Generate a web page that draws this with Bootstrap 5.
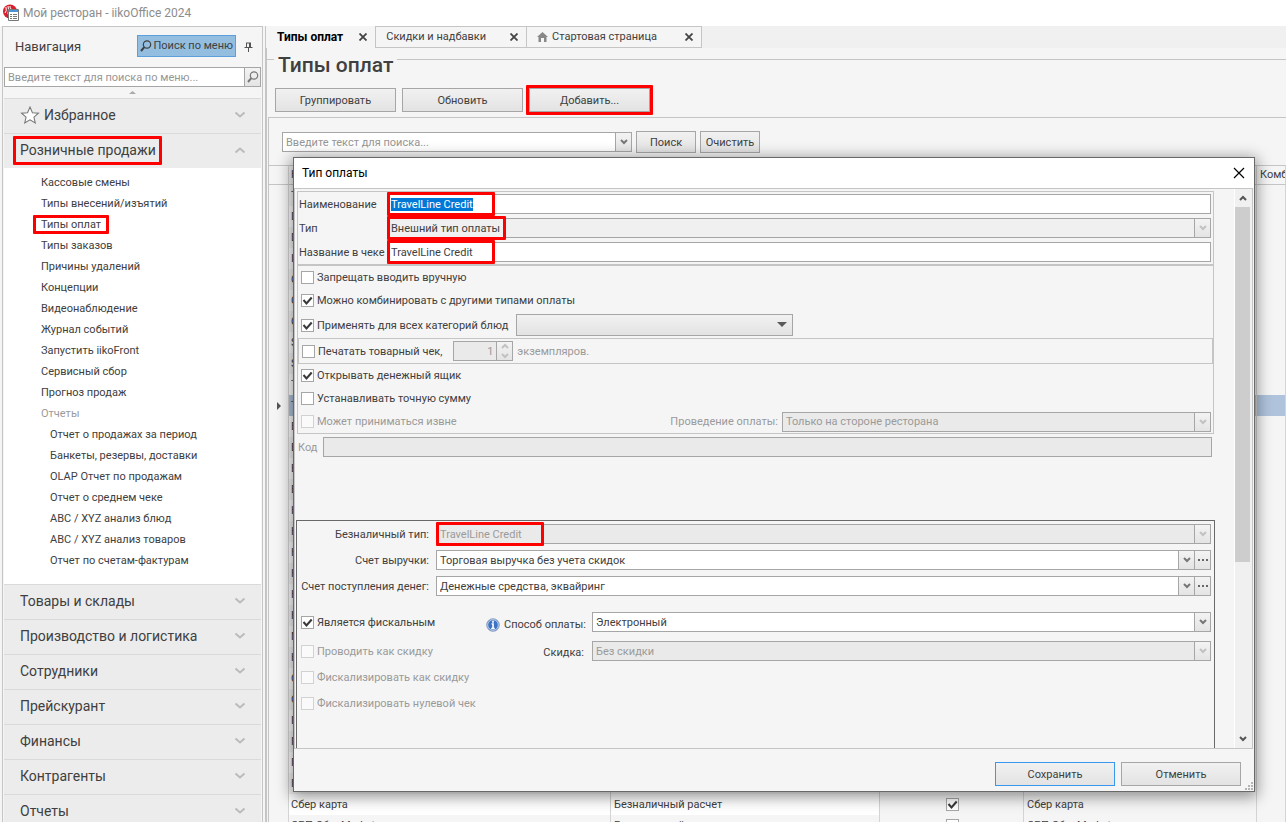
<!DOCTYPE html>
<html lang="ru">
<head>
<meta charset="utf-8">
<meta name="viewport" content="width=device-width, initial-scale=1">
<title>Мой ресторан - iikoOffice 2024</title>
<link href="https://cdn.jsdelivr.net/npm/bootstrap@5.3.0/dist/css/bootstrap.min.css" rel="stylesheet">
<style>
:root{--ink:#404040;--line:#c5c5c5;--edge:#a6a6a6;--face:#f5f5f5;--dim:#9a9a9a}
body{font-family:Roboto,"Liberation Sans",sans-serif;font-size:11px;line-height:16px;color:var(--ink);background:var(--face)}
a{color:inherit;text-decoration:none}
input,select,button{font:inherit;color:inherit;border-radius:0}
.titlebar{height:26px;font-size:12px;color:#8c8c8c;background:#fff;padding-left:3px}
/* annotation frames */
.frame{position:absolute;border:3px solid #f00;border-radius:1px;pointer-events:none;z-index:3}
.frame-head{inset:-6px -6px -7px -7px}
.frame-item{inset:-3px -8px -3px -8px}
.frame-btn{inset:-3px}
.frame-field{top:-3px;bottom:-3px;left:-1px;width:108px}
.frame-wide{width:119px}
/* buttons */
.push{height:24px;min-width:121px;padding:1px 3px 0;border:1px solid var(--edge);border-radius:0;background:linear-gradient(#f1f1f1,#e3e3e3);font-size:11px;line-height:21px;color:var(--ink)}
.push-sm{height:22px;min-width:60px;line-height:19px}
.push-main{border-color:#3a97ee}
.six{gap:6px}
/* side panel */
.side{width:261px;margin-left:2px;border:1px solid var(--line);border-bottom:0;padding:0 1px}
.side-title{font-size:13px;padding:8px 0 0 11px;height:40px}
.menu-find{height:22px;padding:0 2px;gap:1px;border:1px solid #5c9fdc;background:#93bee0;border-radius:0;font-size:11px;line-height:20px;color:var(--ink)}
.group-head{display:flex;align-items:center;height:35px;padding:0 15px 2px 16px;border-top:1px solid #dadada;background:#ececec;font-size:14px;line-height:16px}
.group-list{background:#fff;padding:4px 0 13px 37px}
.group-list li{height:21px;line-height:21px}
.group-list .deep{padding-left:9px}
/* tabs */
.tabs{height:22px;background:#f0f0f0}
.tab-item{height:22px;border:1px solid var(--line);border-left:0;padding:0 8px 0 10px;background:var(--face)}
.tab-item.on{height:24px;border-left:1px solid var(--line);border-bottom:0;margin:-2px 0 0 -2px;font-size:12px;font-weight:700;color:#000;padding:0 8px 0 11px}
.tab-x{border:0;background:none;padding:0;line-height:8px}
.work{border-left:2px solid var(--line);margin-left:2px}
.box-title{font-size:21px;line-height:26px;padding:2px 4px 0;margin:-2px 0 -2px 7px}
.rule{height:1px;background:var(--line);margin-top:7px}
.rule-start{width:7px;margin-right:-7px}
.tools{padding:10px 0 0 8px}
.panel-in{border:1px solid var(--line);border-width:1px 0 0 1px;margin:5px 0 0 1px;padding-top:13px}
/* fields */
.field{height:20px;border:1px solid var(--edge);background:#fff}
.field>input,.field>select{height:18px;line-height:16px;border:0;padding:1px 3px 0;background:none;outline:0;appearance:none;flex:1 1 0;min-width:0;width:0;opacity:1}
.field>input::placeholder{color:#969696}
.field.off{background:#eaeaea;color:var(--dim)}
.field.still{background:#f0f0f0}
.field .knob{width:16px;border:0;border-left:1px solid var(--edge);padding:0;background:linear-gradient(#f3f3f3,#e4e4e4);color:#777;display:flex;align-items:center;justify-content:center;flex:none}
.field.off .knob,.field.still .knob{color:#c2c2c2}
.field>select+.knob{pointer-events:none}
.search{width:350px;margin-left:-3px}
.tall{height:22px;background:linear-gradient(#f1f1f1,#e3e3e3)}
.cats{width:277px}
.lab{padding-top:1px}
::selection{background:#0078d7;color:#fff}
.tick{appearance:none;width:13px;height:13px;margin:0;border:1px solid var(--edge);background:#fff;flex:none}
.tick:checked{background:#fff url("data:image/svg+xml,%3Csvg xmlns='http://www.w3.org/2000/svg' viewBox='0 0 11 11'%3E%3Cpath d='M1.5 5L4.5 8.5L9.7 2.5' fill='none' stroke='%23383838' stroke-width='2'/%3E%3C/svg%3E")}
.tick:disabled{border-color:#d2d2d2;background:#fafafa}
.opt{display:flex;align-items:center;gap:3px;height:23px}
.opt>span{padding-top:1px}
.dim{color:var(--dim)}
/* grid */
.grid{table-layout:fixed;width:100%;border-collapse:separate;border-spacing:0;margin:12px 0 0}
.grid th,.grid td{height:21px;padding:0 2px;border-right:1px solid #d4d4d4;font-weight:400;line-height:16px;white-space:nowrap;overflow:hidden}
.grid td:nth-child(n+3),.grid th:nth-child(n+3){padding-left:3px}
.grid th{height:20px;border-top:1px solid var(--line);border-bottom:1px solid var(--line)}
.grid tr.odd td.zebra{background:#fff}
.grid tr.cur td{background:#afc3dc}
.grid td:first-child,.grid tr.cur td:first-child{background:var(--face)}
.grid td .tick{display:block;margin:auto}
.now{display:block;margin-left:6px}
/* dialog */
.dlg{position:absolute;inset:157px 31px 30px 293px;border:1px solid #696969;background:var(--face);box-shadow:0 3px 14px 2px rgba(0,0,0,.42);z-index:5}
.dlg-head{height:30px;background:#fff;color:#000;font-size:12px;padding:0 9px 0 8px}
.pane{border:1px solid var(--line);min-height:0;margin-right:1px}
.form-area{padding:2px 19px 0 1px}
.set-a{border:1px solid var(--line);padding:2px 2px 2px 1px;margin:0 1px}
.set-a .lab{width:88px}
.set-b{border:1px solid var(--line);margin:0 1px}
.set-b .opt{padding-left:3px}
.set-b .opt-h{height:26px}
.set-b .out{padding-right:2px}
.boxed{border:1px solid var(--line);height:26px;gap:11px}
.spin{width:60px;height:20px}
.copies{margin-left:-7px;padding-top:1px}
.where{width:47%}
.set-c{border:1px solid #696969;border-bottom:0;margin-top:63px;padding:3px 3px 0 2px;gap:6px}
.set-c .lab{width:133px;padding-right:3px;text-align:right;white-space:nowrap}
.set-c .left{width:187px}
.set-c .cap{width:106px;height:20px;white-space:nowrap}
.set-c .cap-low{padding-top:6px}
.set-c .opt{height:20px;padding-left:2px}
.pay{margin-top:10px}
.disc{margin-top:3px}
.code-row{margin:3px 3px 0 2px;height:20px}
.scroller{width:18px;background:#f0f0f0;border-left:1px solid #fff;color:#555}
.scroller button{height:18px;border:0;background:none;padding:0 2px 0 0;color:inherit}
.thumb{flex:355 1 0;background:#cdcdcd;margin-right:2px}
.track{flex:168 1 0}
.dlg-foot{height:42px;padding:13px 13px 0 0}
.dlg-foot .push{width:120px;min-width:0}
.grip{position:absolute;right:1px;bottom:1px}
</style>
</head>
<body class="vh-100 overflow-hidden d-flex flex-column position-relative">
<svg class="d-none" xmlns="http://www.w3.org/2000/svg">
  <symbol id="down" viewBox="0 0 8 6"><path d="M1 1l3 3 3-3" fill="none" stroke="currentColor" stroke-width="2"/></symbol>
  <symbol id="up" viewBox="0 0 8 6"><path d="M1 5l3-3 3 3" fill="none" stroke="currentColor" stroke-width="2"/></symbol>
  <symbol id="chev" viewBox="0 0 12 8"><path d="M1.500 1.500l4.500 4 4.500-4" fill="none" stroke="#bbb" stroke-width="2"/></symbol>
  <symbol id="lens" viewBox="0 0 12 12"><circle cx="7" cy="4.500" r="3.700" fill="none" stroke="currentColor" stroke-width="1.200"/><path d="M4.300 7.200L1 11" stroke="currentColor" stroke-width="2"/></symbol>
  <symbol id="cross" viewBox="0 0 8 8"><path d="M.5.5l7 7M7.500.5l-7 7" stroke="#444" stroke-width="1.800"/></symbol>
</svg>

<header class="titlebar d-flex align-items-center gap-1 flex-shrink-0">
  <svg width="16" height="18" viewBox="0 0 16 18" aria-hidden="true"><circle cx="7" cy="7.500" r="7" fill="#d81e2c"/><path d="M3 3q1 4-1 6M5 2q1 3 0 8M7 2q0 2 1 3" stroke="#fff" fill="none"/><path d="M5.500 5.500h10v11h-10z" fill="#fff" stroke="#777"/><path d="M6 6h9v2H6z" fill="#4b93d8"/><path d="M7 10.500h2m1 0h4M7 12.500h2m1 0h4M7 14.500h2m1 0h4" stroke="#777"/></svg>
  <span>Мой ресторан - iikoOffice 2024</span>
</header>

<div class="d-flex flex-grow-1 overflow-hidden">
  <nav class="side flex-shrink-0 overflow-hidden" aria-label="Навигация">
    <div class="d-flex">
      <div class="side-title flex-grow-1 pt-2 d-flex"><span class="mt-1">Навигация</span></div>
      <div class="d-flex align-items-start gap-2 pt-2">
        <button class="menu-find d-flex align-items-center"><svg width="12" height="12"><use href="#lens"/></svg>Поиск по меню</button>
        <button class="border-0 bg-transparent p-0 me-2 mt-1" aria-label="Закрепить"><svg width="9" height="10" viewBox="0 0 9 10"><path d="M2.500 1v4.500M6 1v4.500M2 1h5M.5 5.500h8M4.500 6v4" stroke="#555" fill="none"/><path d="M5 1h2v4H5z" fill="#555"/></svg></button>
      </div>
    </div>
    <div class="field d-flex"><input type="text" placeholder="Введите текст для поиска по меню..." aria-label="Поиск по меню"><button class="knob" aria-label="Найти"><svg width="12" height="12"><use href="#lens"/></svg></button></div>
    <div class="text-center lh-1 pb-1"><svg class="d-block mx-auto pt-1" width="7" height="7" viewBox="0 0 7 3"><path d="M0 3l3.500-3L7 3z" fill="#aaa"/></svg></div>
    <a href="#" class="group-head"><svg class="me-1" width="20" height="18" viewBox="0 0 18 17"><path d="M9 1l2.300 5.300 5.700.5-4.300 3.700 1.300 5.500L9 13l-5 3 1.300-5.500L1 6.800l5.700-.5z" fill="#fff" stroke="#777"/></svg><span class="flex-grow-1">Избранное</span><svg width="12" height="8"><use href="#chev"/></svg></a>
    <a href="#" class="group-head"><span class="position-relative">Розничные продажи<i class="frame frame-head"></i></span><svg class="ms-auto" width="12" height="8" viewBox="0 0 12 8"><path d="M1.500 6.500l4.500-4 4.500 4" fill="none" stroke="#bbb" stroke-width="2"/></svg></a>
    <ul class="group-list list-unstyled mb-0">
      <li><a href="#">Кассовые смены</a></li><li><a href="#">Типы внесений/изъятий</a></li>
      <li><a href="#" class="position-relative">Типы оплат<i class="frame frame-item"></i></a></li>
      <li><a href="#">Типы заказов</a></li><li><a href="#">Причины удалений</a></li><li><a href="#">Концепции</a></li>
      <li><a href="#">Видеонаблюдение</a></li><li><a href="#">Журнал событий</a></li><li><a href="#">Запустить iikoFront</a></li>
      <li><a href="#">Сервисный сбор</a></li><li><a href="#">Прогноз продаж</a></li><li class="dim">Отчеты</li>
      <li class="deep"><a href="#">Отчет о продажах за период</a></li><li class="deep"><a href="#">Банкеты, резервы, доставки</a></li>
      <li class="deep"><a href="#">OLAP Отчет по продажам</a></li><li class="deep"><a href="#">Отчет о среднем чеке</a></li>
      <li class="deep"><a href="#">ABC / XYZ анализ блюд</a></li><li class="deep"><a href="#">ABC / XYZ анализ товаров</a></li>
      <li class="deep"><a href="#">Отчет по счетам-фактурам</a></li>
    </ul>
    <a href="#" class="group-head"><span class="flex-grow-1">Товары и склады</span><svg width="12" height="8"><use href="#chev"/></svg></a>
    <a href="#" class="group-head"><span class="flex-grow-1">Производство и логистика</span><svg width="12" height="8"><use href="#chev"/></svg></a>
    <a href="#" class="group-head"><span class="flex-grow-1">Сотрудники</span><svg width="12" height="8"><use href="#chev"/></svg></a>
    <a href="#" class="group-head"><span class="flex-grow-1">Прейскурант</span><svg width="12" height="8"><use href="#chev"/></svg></a>
    <a href="#" class="group-head"><span class="flex-grow-1">Финансы</span><svg width="12" height="8"><use href="#chev"/></svg></a>
    <a href="#" class="group-head"><span class="flex-grow-1">Контрагенты</span><svg width="12" height="8"><use href="#chev"/></svg></a>
    <a href="#" class="group-head"><span class="flex-grow-1">Отчеты</span><svg width="12" height="8"><use href="#chev"/></svg></a>
  </nav>

  <main class="work flex-grow-1 d-flex flex-column">
    <div class="tabs d-flex flex-shrink-0">
      <div class="tab-item on d-flex align-items-center"><span class="me-3">Типы оплат</span><button class="tab-x" aria-label="Закрыть"><svg width="8" height="8"><use href="#cross"/></svg></button></div>
      <div class="tab-item d-flex align-items-center gap-4"><a href="#">Скидки и надбавки</a><button class="tab-x" aria-label="Закрыть"><svg width="8" height="8"><use href="#cross"/></svg></button></div>
      <div class="tab-item d-flex align-items-center"><svg class="me-1" width="11" height="10" viewBox="0 0 11 10"><path d="M5.500 0L11 5H9.500v5h-2.500V6H4v4H1.500V5H0z" fill="#888"/></svg><a href="#" class="me-4">Стартовая страница</a><button class="tab-x ms-1" aria-label="Закрыть"><svg width="8" height="8"><use href="#cross"/></svg></button></div>
    </div>
    <div class="d-flex pt-1"><div class="rule rule-start flex-shrink-0"></div><h1 class="box-title mb-0">Типы оплат</h1><div class="rule flex-grow-1"></div></div>
    <div class="tools d-flex six">
      <button class="push">Группировать</button><button class="push">Обновить</button>
      <span class="position-relative"><button class="push d-block">Добавить...</button><i class="frame frame-btn"></i></span>
    </div>
    <section class="panel-in flex-grow-1">
      <div class="d-flex align-items-center gap-1 ps-3">
        <div class="field search d-flex"><input type="text" placeholder="Введите текст для поиска..." aria-label="Поиск"><button class="knob" aria-label="Список"><svg width="8" height="6"><use href="#down"/></svg></button></div>
        <button class="push push-sm">Поиск</button><button class="push push-sm">Очистить</button>
      </div>
      <table class="grid">
        <colgroup><col style="width:20px"><col style="width:322px"><col style="width:269px"><col style="width:144px"><col style="width:233px"><col></colgroup>
        <thead><tr><th></th><th>Н</th><th></th><th></th><th></th><th>Комб</th></tr></thead>
        <tbody id="rows"></tbody>
      </table>
    </section>
  </main>
</div>

<div class="dlg d-flex flex-column" role="dialog" aria-labelledby="dlgTitle">
  <div class="dlg-head d-flex align-items-center justify-content-between flex-shrink-0"><span id="dlgTitle">Тип оплаты</span>
    <button class="border-0 bg-transparent p-0 lh-1" aria-label="Закрыть"><svg width="12" height="12" viewBox="0 0 12 12"><path d="M1 1l10 10M11 1L1 11" stroke="#000" stroke-width="1.200"/></svg></button></div>
  <div class="pane d-flex flex-grow-1 overflow-hidden">
    <form class="form-area flex-grow-1 d-flex flex-column" autocomplete="off">
      <div class="set-a d-flex flex-column gap-1">
        <div class="d-flex align-items-center"><label class="lab" for="nm">Наименование</label><div class="field d-flex flex-grow-1 position-relative"><input id="nm" type="text" value="TravelLine Credit"><i class="frame frame-field"></i></div></div>
        <div class="d-flex align-items-center"><label class="lab" for="tp">Тип</label><div class="field still d-flex flex-grow-1 position-relative"><select id="tp"><option>Внешний тип оплаты</option></select><span class="knob"><svg width="8" height="6"><use href="#down"/></svg></span><i class="frame frame-field frame-wide"></i></div></div>
        <div class="d-flex align-items-center"><label class="lab" for="ch">Название в чеке</label><div class="field d-flex flex-grow-1 position-relative"><input id="ch" type="text" value="TravelLine Credit"><i class="frame frame-field"></i></div></div>
      </div>
      <div class="set-b">
        <label class="opt"><input type="checkbox" class="tick"><span>Запрещать вводить вручную</span></label>
        <label class="opt"><input type="checkbox" class="tick" checked><span>Можно комбинировать с другими типами оплаты</span></label>
        <div class="d-flex opt-h opt gap-2"><label class="opt p-0"><input type="checkbox" class="tick" checked><span>Применять для всех категорий блюд</span></label>
          <div class="field tall cats d-flex"><select aria-label="Категории блюд"><option></option></select><svg class="align-self-center me-1" width="12" height="6" viewBox="0 0 12 6"><path d="M1 0h10L6 5z" fill="#595959"/></svg></div></div>
        <div class="boxed d-flex align-items-center"><label class="opt"><input type="checkbox" class="tick"><span>Печатать товарный чек,</span></label>
          <div class="field off spin d-flex"><input class="text-end" type="text" value="1" disabled aria-label="Количество экземпляров"><span class="knob flex-column"><svg width="8" height="6"><use href="#up"/></svg><svg class="mt-1" width="8" height="6"><use href="#down"/></svg></span></div><span class="dim copies">экземпляров.</span></div>
        <label class="opt"><input type="checkbox" class="tick" checked><span>Открывать денежный ящик</span></label>
        <label class="opt"><input type="checkbox" class="tick"><span>Устанавливать точную сумму</span></label>
        <div class="out d-flex align-items-center dim"><label class="opt"><input type="checkbox" class="tick" disabled><span>Может приниматься извне</span></label>
          <label for="pr" class="ms-auto me-1 lab">Проведение оплаты:</label><div class="field off where d-flex"><select id="pr" disabled><option>Только на стороне ресторана</option></select><span class="knob"><svg width="8" height="6"><use href="#down"/></svg></span></div></div>
      </div>
      <div class="code-row d-flex align-items-center six dim"><label for="kd" class="lab">Код</label><div class="field off d-flex flex-grow-1"><input id="kd" type="text" disabled></div></div>
      <div class="set-c flex-grow-1 d-flex flex-column">
        <div class="d-flex align-items-center gap-1"><label class="lab" for="bn">Безналичный тип:</label><div class="field off d-flex flex-grow-1 position-relative"><select id="bn" disabled><option>TravelLine Credit</option></select><span class="knob"><svg width="8" height="6"><use href="#down"/></svg></span><i class="frame frame-field"></i></div></div>
        <div class="d-flex align-items-center gap-1"><label class="lab" for="sv">Счет выручки:</label><div class="field d-flex flex-grow-1"><select id="sv"><option>Торговая выручка без учета скидок</option></select><span class="knob"><svg width="8" height="6"><use href="#down"/></svg></span><button type="button" class="knob" aria-label="Выбрать счет"><svg width="10" height="2"><path d="M0 0h2v2H0zM4 0h2v2H4zM8 0h2v2H8z" fill="#666"/></svg></button></div></div>
        <div class="d-flex align-items-center gap-1"><label class="lab" for="sp">Счет поступления денег:</label><div class="field d-flex flex-grow-1"><select id="sp"><option>Денежные средства, эквайринг</option></select><span class="knob"><svg width="8" height="6"><use href="#down"/></svg></span><button type="button" class="knob" aria-label="Выбрать счет"><svg width="10" height="2"><path d="M0 0h2v2H0zM4 0h2v2H4zM8 0h2v2H8z" fill="#666"/></svg></button></div></div>
        <div class="pay d-flex align-items-center"><label class="opt left"><input type="checkbox" class="tick" checked><span>Является фискальным</span></label>
          <div class="cap cap-low d-flex align-items-center gap-1"><svg width="14" height="14" viewBox="0 0 14 14"><circle cx="7" cy="7" r="6.300" fill="#3d73c4" stroke="#9aa9c0"/><circle cx="7" cy="7" r="5.300" fill="none" stroke="#dce8f8" stroke-width=".8"/><path d="M7 2.800v2M5.500 6H7v4.500M5.200 10.500h3.600" stroke="#fff" stroke-width="1.700"/></svg><label for="py">Способ оплаты:</label></div>
          <div class="field d-flex flex-grow-1"><select id="py"><option>Электронный</option></select><span class="knob"><svg width="8" height="6"><use href="#down"/></svg></span></div></div>
        <div class="disc d-flex align-items-center"><label class="opt left dim"><input type="checkbox" class="tick" disabled><span>Проводить как скидку</span></label>
          <label class="cap text-end pe-2 pt-1" for="sk">Скидка:</label>
          <div class="field off d-flex flex-grow-1"><select id="sk" disabled><option>Без скидки</option></select><span class="knob"><svg width="8" height="6"><use href="#down"/></svg></span></div></div>
        <label class="opt dim"><input type="checkbox" class="tick" disabled><span>Фискализировать как скидку</span></label>
        <label class="opt dim"><input type="checkbox" class="tick" disabled><span>Фискализировать нулевой чек</span></label>
      </div>
    </form>
    <div class="scroller d-flex flex-column flex-shrink-0"><button aria-label="Вверх"><svg width="8" height="6"><use href="#up"/></svg></button><div class="thumb"></div><div class="track"></div><button aria-label="Вниз"><svg width="8" height="6"><use href="#down"/></svg></button></div>
  </div>
  <div class="dlg-foot d-flex justify-content-end six flex-shrink-0"><button class="push push-main">Сохранить</button><button class="push">Отменить</button></div>
  <svg class="grip" width="8" height="8"><path d="M6 0h2v2H6zM3 3h2v2H3zM6 3h2v2H6zM0 6h2v2H0zM3 6h2v2H3zM6 6h2v2H6z" fill="#b5b5b5"/></svg>
</div>

<script src="https://cdn.jsdelivr.net/npm/bootstrap@5.3.0/dist/js/bootstrap.bundle.min.js"></script>
<script>
const names = [...'TDDICCCSSTTВВВВННННННМНООППП', 'П', 'Сбер карта', 'СБП СберMarket'];
const tbody = document.getElementById('rows');
names.forEach((name, i) => {
  const current = i === 10, last = i >= names.length - 2;
  const kind = last ? 'Безналичный расчет' : '';
  const tick = last ? '<input type="checkbox" class="tick" checked aria-label="Фискальный">' : '';
  const mark = current ? '<svg class="now" width="5" height="8"><path d="M0 0l4 4-4 4z" fill="#555"/></svg>' : '';
  tbody.insertAdjacentHTML('beforeend',
    `<tr class="${current ? 'cur' : i % 2 ? 'odd' : ''}"><td>${mark}</td><td class="zebra">${name}</td><td class="zebra">${kind}</td><td>${tick}</td><td>${last ? name : ''}</td><td></td></tr>`);
});
const nameField = document.getElementById('nm');
nameField.focus();
nameField.select();
</script>
</body>
</html>
